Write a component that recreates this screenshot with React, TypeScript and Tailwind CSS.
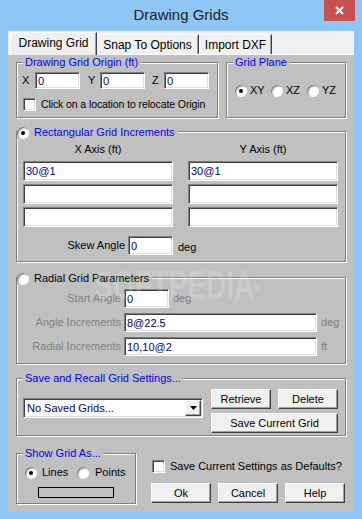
import type { ReactNode } from 'react'

const sunken =
  'border border-t-[#808080] border-l-[#808080] border-b-white border-r-white shadow-[inset_1px_1px_0_#404040,inset_-1px_-1px_0_#dfdfdf]'

const raised =
  'border border-t-white border-l-white border-b-[#404040] border-r-[#404040] shadow-[inset_-1px_-1px_0_#a0a0a0] bg-[#f0f0f0]'

function Field({ value = '', className = '' }: { value?: string; className?: string }) {
  return (
    <input
      readOnly
      value={value}
      className={`${sunken} bg-white px-[2px] text-[11px] leading-[13px] text-[#000080] outline-none ${className}`}
    />
  )
}

function Radio({ checked }: { checked?: boolean }) {
  return (
    <span className="flex h-[12px] w-[12px] shrink-0 items-center justify-center rounded-full bg-white shadow-[inset_1px_1px_0_#808080,inset_2px_2px_0_#d4d4d4]">
      {checked && <span className="h-[4px] w-[4px] rounded-full bg-black" />}
    </span>
  )
}

function Check() {
  return <span className={`block h-[13px] w-[13px] shrink-0 bg-white ${sunken}`} />
}

function Btn({ children, className = '' }: { children: ReactNode; className?: string }) {
  return (
    <button className={`flex h-[20px] items-center justify-center text-[11px] leading-[13px] text-black ${raised} ${className}`}>
      {children}
    </button>
  )
}

function Group({
  title,
  radio,
  disabled,
  className = '',
  children,
}: {
  title: string
  radio?: 'on' | 'off'
  disabled?: boolean
  className?: string
  children?: ReactNode
}) {
  return (
    <div className={`relative shrink-0 border border-[#808080] shadow-[inset_1px_1px_0_#fff,1px_1px_0_#fff] ${className}`}>
      {radio ? (
        <span className="absolute -top-[6px] left-0 flex items-center whitespace-nowrap bg-[#c0c0c0] pr-[3px]">
          <Radio checked={radio === 'on'} />
          <span className={`ml-[5px] ${disabled ? 'text-black' : 'text-[#0000ff]'}`}>{title}</span>
        </span>
      ) : (
        <span className="absolute -top-[7px] left-[6px] whitespace-nowrap bg-[#c0c0c0] px-[2px] text-[#0000ff]">{title}</span>
      )}
      {children}
    </div>
  )
}

export default function App() {
  return (
    <div className="flex h-[519px] w-[362px] flex-col bg-[#8fc6f5] font-['Liberation_Sans',Arial,sans-serif] text-[11px] leading-[13px] text-black">
      {/* title bar */}
      <div className="relative flex h-[31px] shrink-0 items-center justify-center">
        <span className="pb-[1px] text-[15px] leading-[18px] text-[#222]">Drawing Grids</span>
        <div className="absolute right-[7px] top-0 flex h-[21px] w-[31px] items-center justify-center bg-[#c75050]">
          <svg width="9" height="9" viewBox="0 0 9 9">
            <path d="M1 1 L8 8 M8 1 L1 8" stroke="#fff" strokeWidth="2" />
          </svg>
        </div>
      </div>

      <div className="mx-[8px] mb-[7px] flex flex-1 flex-col">
        {/* tabs */}
        <div className="flex h-[24px] shrink-0 items-end bg-[#f0f0f0] pl-[2px] text-[12px] leading-[14px] shadow-[inset_0_-1px_0_#fff]">
          <div className="flex h-[23px] w-[87px] items-center justify-center border-l border-t border-r border-l-white border-t-white border-r-[#404040] bg-[#f0f0f0] pb-[3px] shadow-[inset_-1px_0_0_#a0a0a0]">
            Drawing Grid
          </div>
          <div className="mb-[1px] flex h-[20px] w-[102px] items-center justify-center border-r border-t border-r-[#404040] border-t-white shadow-[inset_-1px_0_0_#a0a0a0]">
            Snap To Options
          </div>
          <div className="mb-[1px] flex h-[20px] w-[73px] items-center justify-center border-l border-r border-t border-l-white border-r-[#404040] border-t-white shadow-[inset_-1px_0_0_#a0a0a0]">
            Import DXF
          </div>
        </div>

        {/* panel */}
        <div className="relative flex flex-1 flex-col bg-[#c0c0c0] px-[8px]">
          <div className="mt-[7px] flex">
            <Group title="Drawing Grid Origin (ft)" className="h-[56px] w-[202px]">
              <div className="flex flex-col pl-[5px] pt-[9px]">
                <div className="flex items-center">
                  <span className="w-[13px]">X</span>
                  <Field value="0" className="h-[17px] w-[45px]" />
                  <span className="ml-[8px] w-[12px]">Y</span>
                  <Field value="0" className="h-[17px] w-[45px]" />
                  <span className="ml-[7px] w-[12px]">Z</span>
                  <Field value="0" className="h-[17px] w-[45px]" />
                </div>
                <div className="mt-[9px] flex items-center whitespace-nowrap pl-[1px]">
                  <Check />
                  <span className="ml-[5px] text-[10.5px] tracking-[-0.1px]">Click on a location to relocate Origin</span>
                </div>
              </div>
            </Group>
            <Group title="Grid Plane" className="ml-[8px] h-[56px] w-[120px]">
              <div className="flex pl-[8px] pt-[21px]">
                {['XY', 'XZ', 'YZ'].map((p, i) => (
                  <div key={p} className="flex w-[36px] items-center">
                    <Radio checked={i === 0} />
                    <span className="ml-[3px]">{p}</span>
                  </div>
                ))}
              </div>
            </Group>
          </div>

          <Group title="Rectangular Grid Increments" radio="on" className="mt-[13px] h-[131px]">
            <div className="mt-[11px] flex gap-[15px] pl-[6px]">
              {['X Axis (ft)', 'Y Axis (ft)'].map((h) => (
                <div key={h} className="flex w-[150px] flex-col">
                  <div className="text-center">{h}</div>
                  <div className="mt-[5px] flex flex-col gap-[3px]">
                    <Field value="30@1" className="h-[20px] w-full" />
                    <Field className="h-[20px] w-full" />
                    <Field className="h-[20px] w-full" />
                  </div>
                </div>
              ))}
            </div>
            <div className="mt-[9px] flex items-center pl-[6px]">
              <span className="w-[105px] pr-[3px] text-right">Skew Angle</span>
              <Field value="0" className="h-[19px] w-[45px]" />
              <span className="ml-[5px] mt-[3px]">deg</span>
            </div>
          </Group>

          <Group title="Radial Grid Parameters" radio="off" disabled className="mt-[15px] h-[87px]">
            <div className="mt-[11px] flex flex-col gap-[5px] text-[#808080]">
              <div className="flex items-center">
                <span className="w-[104px] text-right">Start Angle</span>
                <Field value="0" className="ml-[3px] h-[19px] w-[45px]" />
                <span className="ml-[4px]">deg</span>
              </div>
              <div className="flex items-center">
                <span className="w-[104px] text-right">Angle Increments</span>
                <Field value="8@22.5" className="ml-[3px] h-[19px] w-[193px]" />
                <span className="ml-[4px]">deg</span>
              </div>
              <div className="flex items-center">
                <span className="w-[104px] text-right">Radial Increments</span>
                <Field value="10,10@2" className="ml-[3px] h-[19px] w-[193px]" />
                <span className="ml-[4px]">ft</span>
              </div>
            </div>
          </Group>

          <Group title="Save and Recall Grid Settings..." className="mt-[14px] h-[58px]">
            <div className="flex items-start">
              <div className={`ml-[6px] mt-[19px] flex h-[20px] w-[180px] items-center justify-between bg-white pl-[3px] pr-[1px] text-[#000080] ${sunken}`}>
                <span>No Saved Grids...</span>
                <span className={`flex h-[16px] w-[16px] items-center justify-center ${raised}`}>
                  <svg width="7" height="4" viewBox="0 0 7 4">
                    <path d="M0 0 H7 L3.5 4 Z" fill="#000" />
                  </svg>
                </span>
              </div>
              <div className="ml-[8px] mt-[10px] flex flex-col gap-[4px]">
                <div className="flex gap-[7px]">
                  <Btn className="w-[60px]">Retrieve</Btn>
                  <Btn className="w-[60px]">Delete</Btn>
                </div>
                <Btn className="w-[127px]">Save Current Grid</Btn>
              </div>
            </div>
          </Group>

          <div className="mt-[17px] flex">
            <Group title="Show Grid As..." className="h-[51px] w-[120px]">
              <div className="mt-[12px] flex pl-[8px]">
                <div className="flex w-[52px] items-center">
                  <Radio checked />
                  <span className="ml-[5px]">Lines</span>
                </div>
                <div className="flex items-center">
                  <Radio />
                  <span className="ml-[6px]">Points</span>
                </div>
              </div>
              <div className="ml-[21px] mt-[8px] h-[11px] w-[76px] border border-black" />
            </Group>
            <div className="ml-[15px] flex flex-col">
              <div className="mt-[7px] flex items-center whitespace-nowrap pl-[1px]">
                <Check />
                <span className="ml-[5px]">Save Current Settings as Defaults?</span>
              </div>
              <div className="mt-[10px] flex gap-[7px]">
                <Btn className="w-[60px]">Ok</Btn>
                <Btn className="w-[60px]">Cancel</Btn>
                <Btn className="w-[60px]">Help</Btn>
              </div>
            </div>
          </div>

          {/* watermark */}
          <span className="pointer-events-none absolute left-[86px] top-[210px] origin-left scale-x-[0.7] text-[40px] font-bold leading-none text-white/20">
            SOFTPEDIA<sup className="text-[12px]">®</sup>
          </span>
        </div>
      </div>
    </div>
  )
}
